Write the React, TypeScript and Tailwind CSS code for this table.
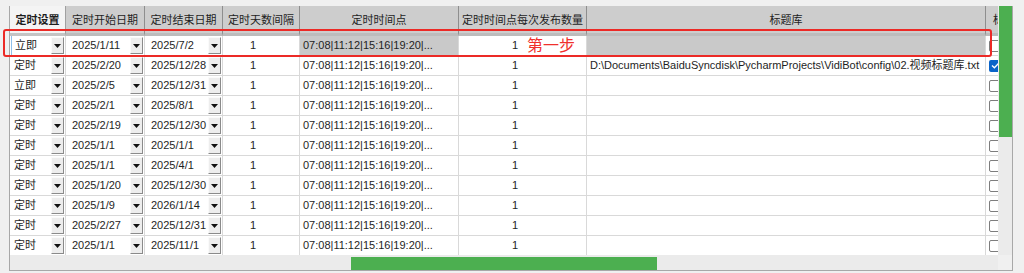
import React from "react";

const rows = [
  ["立即", "2025/1/11", "2025/7/2"],
  ["定时", "2025/2/20", "2025/12/28"],
  ["立即", "2025/2/5", "2025/12/31"],
  ["定时", "2025/2/1", "2025/8/1"],
  ["定时", "2025/2/19", "2025/12/30"],
  ["定时", "2025/1/1", "2025/1/1"],
  ["定时", "2025/1/1", "2025/4/1"],
  ["定时", "2025/1/20", "2025/12/30"],
  ["定时", "2025/1/9", "2026/1/14"],
  ["定时", "2025/2/27", "2025/12/31"],
  ["定时", "2025/1/1", "2025/11/1"],
];

const times = "07:08|11:12|15:16|19:20|...";
const path = "D:\\Documents\\BaiduSyncdisk\\PycharmProjects\\VidiBot\\config\\02.视频标题库.txt";

function DropBtn() {
  return (
    <div className="flex h-[17px] w-[13px] shrink-0 items-center justify-center border border-t-[#fafafa] border-l-[#fafafa] border-r-[#8a8a8a] border-b-[#8a8a8a] bg-[#ededed]">
      <svg width="7" height="4" viewBox="0 0 7 4">
        <path d="M0 0 H7 L3.5 4 Z" fill="#111" />
      </svg>
    </div>
  );
}

function Check({ on }: { on?: boolean }) {
  if (on) {
    return (
      <div className="flex h-[12px] w-[12px] items-center justify-center rounded-[2px] bg-[#0a64c8]">
        <svg width="9" height="7" viewBox="0 0 9 7">
          <path d="M1 3.5 L3.4 5.8 L8 1" stroke="#fff" strokeWidth="1.3" fill="none" />
        </svg>
      </div>
    );
  }
  return <div className="h-[12px] w-[12px] rounded-[2px] border border-[#7d7d7d] bg-white" />;
}

function Row({ r, i }: { r: string[]; i: number }) {
  const first = i === 0;
  return (
    <div className="flex h-[20px] shrink-0">
      <div className="flex w-[56px] shrink-0 items-center justify-between border-r border-b border-[#d9d9d9] bg-white pr-px">
        <span className={first ? "ml-px h-full border-l border-[#8fc0ea] pl-[3px] leading-[19px]" : "pl-[4px]"}>{r[0]}</span>
        <DropBtn />
      </div>
      <div className="flex w-[79px] shrink-0 items-center justify-between border-r border-b border-[#d9d9d9] bg-white pl-[6px] pr-px">
        <span>{r[1]}</span>
        <DropBtn />
      </div>
      <div className="flex w-[78px] shrink-0 items-center justify-between border-r border-b border-[#d9d9d9] bg-white pl-[6px] pr-px">
        <span>{r[2]}</span>
        <DropBtn />
      </div>
      <div className="flex w-[77px] shrink-0 items-center border-r border-b border-[#d9d9d9] bg-white pl-[27px]">1</div>
      <div className={`flex w-[159px] shrink-0 items-center border-r border-b border-[#d9d9d9] pl-[3px] ${first ? "bg-[#c9c9c9]" : "bg-white"}`}>
        {times}
      </div>
      <div className="flex w-[128px] shrink-0 items-center border-r border-b border-[#d9d9d9] bg-white pl-[53px]">1</div>
      <div className={`flex w-[399px] shrink-0 items-center overflow-hidden whitespace-nowrap border-r border-b border-[#d9d9d9] pl-[3px] ${first ? "bg-[#c9c9c9]" : "bg-white"}`}>
        {i === 1 ? path : ""}
      </div>
      <div className="flex w-[40px] shrink-0 items-center border-b border-[#d9d9d9] bg-white pl-[3px]">
        <Check on={i === 1} />
      </div>
    </div>
  );
}

export default function App() {
  return (
    <div className="relative h-[273px] w-[1024px] overflow-hidden bg-[#f0f0f0] pt-[6px] pl-[9px] font-['Liberation_Sans','Noto_Sans_CJK_SC',sans-serif] text-[11px] text-[#1e1e1e]">
      <div className="flex h-[265px] w-[1004px] flex-col border-r border-b border-l border-[#a8a8a8]">
        <div className="flex min-h-0 flex-1">
          {/* grid viewport */}
          <div className="flex w-[988px] shrink-0 flex-col overflow-hidden">
            {/* header */}
            <div className="flex h-[30px] shrink-0">
              <div className="flex w-[56px] shrink-0 items-center justify-center border-r border-b-[3px] border-r-[#a0a0a0] border-b-[#c4c4c4] bg-[#f4f4f4] pt-[2px] font-bold">定时设置</div>
              <div className="flex w-[79px] shrink-0 items-center justify-center border-r border-b-[3px] border-r-[#8e8e8e] border-b-[#bcbcbc] bg-[#cdcdcd] pt-[2px]">定时开始日期</div>
              <div className="flex w-[78px] shrink-0 items-center justify-center border-r border-b-[3px] border-r-[#8e8e8e] border-b-[#bcbcbc] bg-[#cdcdcd] pt-[2px]">定时结束日期</div>
              <div className="flex w-[77px] shrink-0 items-center justify-center border-r border-b-[3px] border-r-[#8e8e8e] border-b-[#bcbcbc] bg-[#cdcdcd] pt-[2px]">定时天数间隔</div>
              <div className="flex w-[159px] shrink-0 items-center justify-center border-r border-b-[3px] border-r-[#8e8e8e] border-b-[#bcbcbc] bg-[#cdcdcd] pt-[2px]">定时时间点</div>
              <div className="flex w-[128px] shrink-0 items-center justify-center border-r border-b-[3px] border-r-[#8e8e8e] border-b-[#bcbcbc] bg-[#cdcdcd] pt-[2px]">定时时间点每次发布数量</div>
              <div className="flex w-[399px] shrink-0 items-center justify-center border-r border-b-[3px] border-r-[#8e8e8e] border-b-[#bcbcbc] bg-[#cdcdcd] pt-[2px]">标题库</div>
              <div className="flex w-[40px] shrink-0 items-center border-b-[3px] border-b-[#bcbcbc] bg-[#cdcdcd] pl-[7px] pt-[2px] whitespace-nowrap">标题排序</div>
            </div>
            {rows.map((r, i) => (
              <Row key={i} r={r} i={i} />
            ))}
          </div>
          {/* vertical scrollbar */}
          <div className="flex w-[14px] shrink-0 flex-col bg-[#ebebeb] pl-px">
            <div className="h-[131px] bg-[#4caf50]" />
          </div>
        </div>
        {/* horizontal scrollbar */}
        <div className="flex h-[15px] shrink-0">
          <div className="flex w-[988px] shrink-0 items-end bg-[#ebebeb] pl-[341px]">
            <div className="h-[13px] w-[306px] bg-[#4caf50]" />
          </div>
          <div className="w-[14px] bg-[#f0f0f0]" />
        </div>
      </div>

      {/* annotation */}
      <div className="pointer-events-none absolute top-[29px] left-[3px] h-[28px] w-[989px] rounded-[3px] border-2 border-[#ec2a26]" />
      <div className="absolute top-[34px] left-[527px] font-['Noto_Sans_CJK_SC',sans-serif] text-[16px] leading-[20px] text-[#f0302c]">第一步</div>
    </div>
  );
}
